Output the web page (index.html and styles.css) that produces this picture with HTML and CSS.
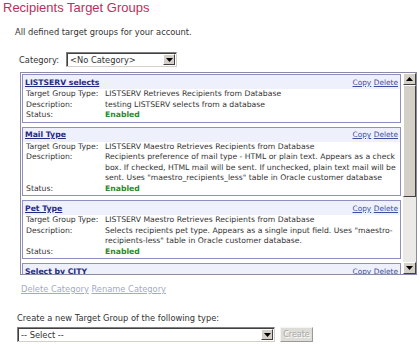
FILE: index.html
```html
<!DOCTYPE html>
<html lang="en">
<head>
    <meta charset="UTF-8">
    <title>Recipients Target Groups</title>
    <link rel="stylesheet" href="styles.css">
</head>
<body>
    <h1 class="page-title">Recipients Target Groups</h1>
    <p class="intro">All defined target groups for your account.</p>

    <div class="category-row">
        <span>Category:</span>
        <div class="dropdown cat-select">
            <span class="dd-text">&lt;No Category&gt;</span>
            <span class="dd-arrow"><svg width="7" height="4" viewBox="0 0 7 4"><path d="M0 0h7L3.5 4z" fill="#000"/></svg></span>
        </div>
    </div>

    <div class="group-list">
        <div class="group-scroll">
            <div class="group-card">
                <div class="card-head">
                    <a class="group-name">LISTSERV selects</a>
                    <span class="card-links"><a>Copy</a> <a>Delete</a></span>
                </div>
                <div class="card-body">
                    <span>Target Group Type:</span><span>LISTSERV Retrieves Recipients from Database</span>
                    <span>Description:</span><span>testing LISTSERV selects from a database</span>
                    <span>Status:</span><span class="enabled">Enabled</span>
                </div>
            </div>
            <div class="group-card">
                <div class="card-head">
                    <a class="group-name">Mail Type</a>
                    <span class="card-links"><a>Copy</a> <a>Delete</a></span>
                </div>
                <div class="card-body">
                    <span>Target Group Type:</span><span>LISTSERV Maestro Retrieves Recipients from Database</span>
                    <span>Description:</span><span>Recipients preference of mail type - HTML or plain text. Appears as a check box. If checked, HTML mail will be sent. If unchecked, plain text mail will be sent. Uses "maestro_recipients_less" table in Oracle customer database</span>
                    <span>Status:</span><span class="enabled">Enabled</span>
                </div>
            </div>
            <div class="group-card">
                <div class="card-head">
                    <a class="group-name">Pet Type</a>
                    <span class="card-links"><a>Copy</a> <a>Delete</a></span>
                </div>
                <div class="card-body">
                    <span>Target Group Type:</span><span>LISTSERV Maestro Retrieves Recipients from Database</span>
                    <span>Description:</span><span>Selects recipients pet type. Appears as a single input field. Uses "maestro-recipients-less" table in Oracle customer database.</span>
                    <span>Status:</span><span class="enabled">Enabled</span>
                </div>
            </div>
            <div class="group-card">
                <div class="card-head">
                    <a class="group-name">Select by CITY</a>
                    <span class="card-links"><a>Copy</a> <a>Delete</a></span>
                </div>
            </div>
        </div>
        <div class="scrollbar">
            <div class="sb-btn"><svg width="7" height="4" viewBox="0 0 7 4"><path d="M0 4h7L3.5 0z" fill="#000"/></svg></div>
            <div class="sb-thumb"></div>
            <div class="sb-track"></div>
            <div class="sb-btn"><svg width="7" height="4" viewBox="0 0 7 4"><path d="M0 0h7L3.5 4z" fill="#000"/></svg></div>
        </div>
    </div>

    <div class="cat-actions"><a>Delete Category</a> <a>Rename Category</a></div>

    <p class="create-label">Create a new Target Group of the following type:</p>
    <div class="create-row">
        <div class="dropdown type-select">
            <span class="dd-text">-- Select --</span>
            <span class="dd-arrow"><svg width="7" height="4" viewBox="0 0 7 4"><path d="M0 0h7L3.5 4z" fill="#000"/></svg></span>
        </div>
        <button class="create-btn" disabled>Create</button>
    </div>
</body>
</html>
```

FILE: styles.css
```css
body {
    margin: 0;
    background: #fff;
    color: #333;
    font-family: "DejaVu Sans", Verdana, sans-serif;
    font-size: 8.3px;
}
.page-title {
    margin: 0;
    padding-left: 3px;
    font: normal 13px/16px "Liberation Sans", Arial, sans-serif;
    color: #c42b5c;
}
.intro {
    margin: 10px 0 0 15px;
    line-height: 12px;
}
.category-row {
    display: flex; align-items: center; gap: 7px;
    margin: 14px 0 0 19px;
    height: 15px;
}
.dropdown {
    display: flex; align-items: center;
    height: 15px;
    box-sizing: border-box;
    background: #fff;
    border: 1px solid;
    border-color: #808080 #d4d0c8 #d4d0c8 #808080;
    box-shadow: inset 1px 1px 0 #404040;
}
.cat-select { width: 111px; }
.dd-text { flex: 1; padding-left: 3px; white-space: nowrap; }
.dd-arrow, .sb-btn {
    display: flex; align-items: center; justify-content: center;
    background: #d4d0c8;
    border: 1px solid;
    border-color: #fff #404040 #404040 #fff;
    box-sizing: border-box;
}
.dd-arrow { width: 12px; height: 11px; margin-right: 1px; }

.group-list {
    display: flex;
    margin: 5px 0 0 20px;
    width: 397px; height: 203px;
    box-sizing: border-box;
    border: 1px solid #8a8aa6;
}
.group-scroll {
    flex: 1;
    overflow: hidden;
    padding: 1px 2px 0 1px;
}
.group-card {
    border: 1px solid #8f8fbf;
    margin-bottom: 4px;
    font-size: 7.7px;
}
.card-head {
    display: flex; justify-content: space-between; align-items: center;
    height: 14px;
    padding: 0 2px;
    background: #eef0fb;
}
.group-name {
    color: #1f2a80;
    font-weight: bold;
    text-decoration: underline;
}
.card-links a {
    color: #3d4ea0;
    text-decoration: underline;
    font-size: 7.4px;
}
.card-body {
    display: grid;
    grid-template-columns: 79px 1fr;
    line-height: 10.5px;
    padding: 0 4px 1px 3px;
}
.enabled { color: #2b8a2b; font-weight: bold; }

.scrollbar {
    display: flex; flex-direction: column;
    width: 13px;
}
.sb-btn { height: 12px; }
.sb-thumb {
    height: 112px;
    box-sizing: border-box;
    background: #d4d0c8;
    border: 1px solid;
    border-color: #fff #404040 #404040 #fff;
}
.sb-track { flex: 1; background: #eceae6; }

.cat-actions {
    margin: 8px 0 0 21px;
    line-height: 12px;
}
.cat-actions a {
    color: #a3aac6;
    text-decoration: underline;
}
.create-label {
    margin: 17px 0 0 17px;
    line-height: 12px;
}
.create-row {
    display: flex; align-items: center; gap: 5px;
    margin: 3px 0 0 17px;
}
.type-select { width: 258px; }
.create-btn {
    width: 33px; height: 15px;
    padding: 0;
    font: 8px "DejaVu Sans", Verdana, sans-serif;
    color: #a8a8a8;
    text-shadow: 1px 1px 0 #fff;
    background: #dedcd6;
    border: 1px solid;
    border-color: #f4f4f4 #9a9a9a #9a9a9a #f4f4f4;
}
```
